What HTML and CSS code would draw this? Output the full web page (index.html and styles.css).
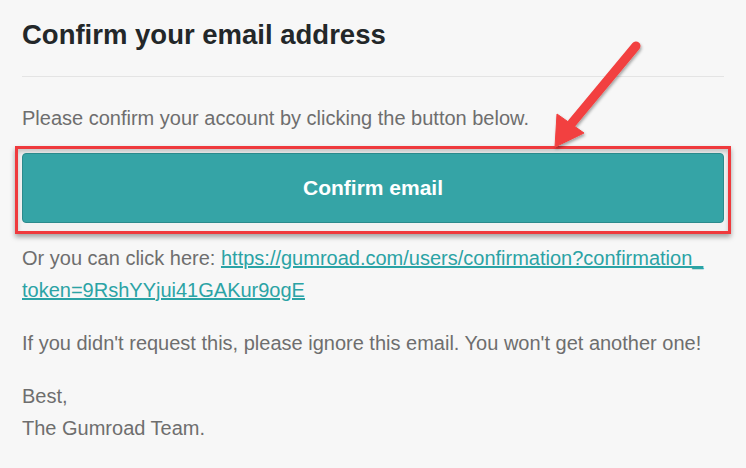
FILE: index.html
```html
<!DOCTYPE html>
<html lang="en">
<head>
<meta charset="utf-8">
<title>Confirm your email address</title>
<link rel="stylesheet" href="styles.css">
</head>
<body>
<main class="email">
  <h1 class="title">Confirm your email address</h1>
  <hr class="rule">
  <p class="text">Please confirm your account by clicking the button below.</p>
  <div class="highlight">
    <a class="button" href="#">Confirm email</a>
  </div>
  <p class="text link-para">Or you can click here: <a class="link" href="#">https://gumroad.com/users/confirmation?confirmation_<wbr>token=9RshYYjui41GAKur9ogE</a></p>
  <p class="text">If you didn't request this, please ignore this email. You won't get another one!</p>
  <p class="text">Best,<br>The Gumroad Team.</p>
</main>
<svg class="arrow" width="746" height="468" viewBox="0 0 746 468" aria-hidden="true">
  <defs>
    <filter id="sh" x="-20%" y="-20%" width="140%" height="140%">
      <feDropShadow dx="1" dy="2" stdDeviation="1.5" flood-color="#000" flood-opacity="0.35"/>
    </filter>
  </defs>
  <g filter="url(#sh)" fill="#f2403f" stroke="#f2403f">
    <line x1="636" y1="46" x2="572" y2="123" stroke-width="9" stroke-linecap="round"/>
    <polygon points="555,147 557,114 584,133" stroke-width="1" stroke-linejoin="round"/>
  </g>
</svg>
</body>
</html>
```
FILE: styles.css
```css
html, body {
  margin: 0;
  padding: 0;
  background: #f7f7f7;
}

body {
  font-family: "Liberation Sans", Arial, sans-serif;
  width: 746px;
  height: 468px;
  overflow: hidden;
  position: relative;
}

.email {
  padding: 0 22px;
  display: flex;
  flex-direction: column;
}

.title {
  margin: 19px 0 0;
  font-size: 27.5px;
  line-height: 32px;
  font-weight: bold;
  color: #232729;
}

.rule {
  margin: 25px 0 0;
  border: 0;
  height: 1px;
  background: #e4e4e4;
}

.text {
  margin: 0;
  font-size: 20px;
  line-height: 32px;
  color: #6e6e6e;
}

.rule + .text {
  margin-top: 25px;
}

.highlight {
  margin: 12px -7px 0;
  border: 3px solid #ef3a3d;
  padding: 4px 4px 8px;
  background: #f2f2f2;
  box-shadow: 0 3px 5px rgba(0, 0, 0, 0.35), inset 0 3px 4px rgba(0, 0, 0, 0.18);
  display: flex;
}

.button {
  flex: 1;
  height: 68px;
  display: flex;
  align-items: center;
  justify-content: center;
  background: #35a4a6;
  border: 1px solid #2b8a8c;
  border-radius: 4px;
  color: #ffffff;
  font-size: 21px;
  font-weight: bold;
  text-decoration: none;
}

.link-para {
  margin-top: 8px;
}

.link-para + .text,
.link-para + .text + .text {
  margin-top: 21px;
}

.link {
  color: #2ba3a5;
  text-decoration: underline;
}

.arrow {
  position: absolute;
  left: 0;
  top: 0;
  pointer-events: none;
}
```
